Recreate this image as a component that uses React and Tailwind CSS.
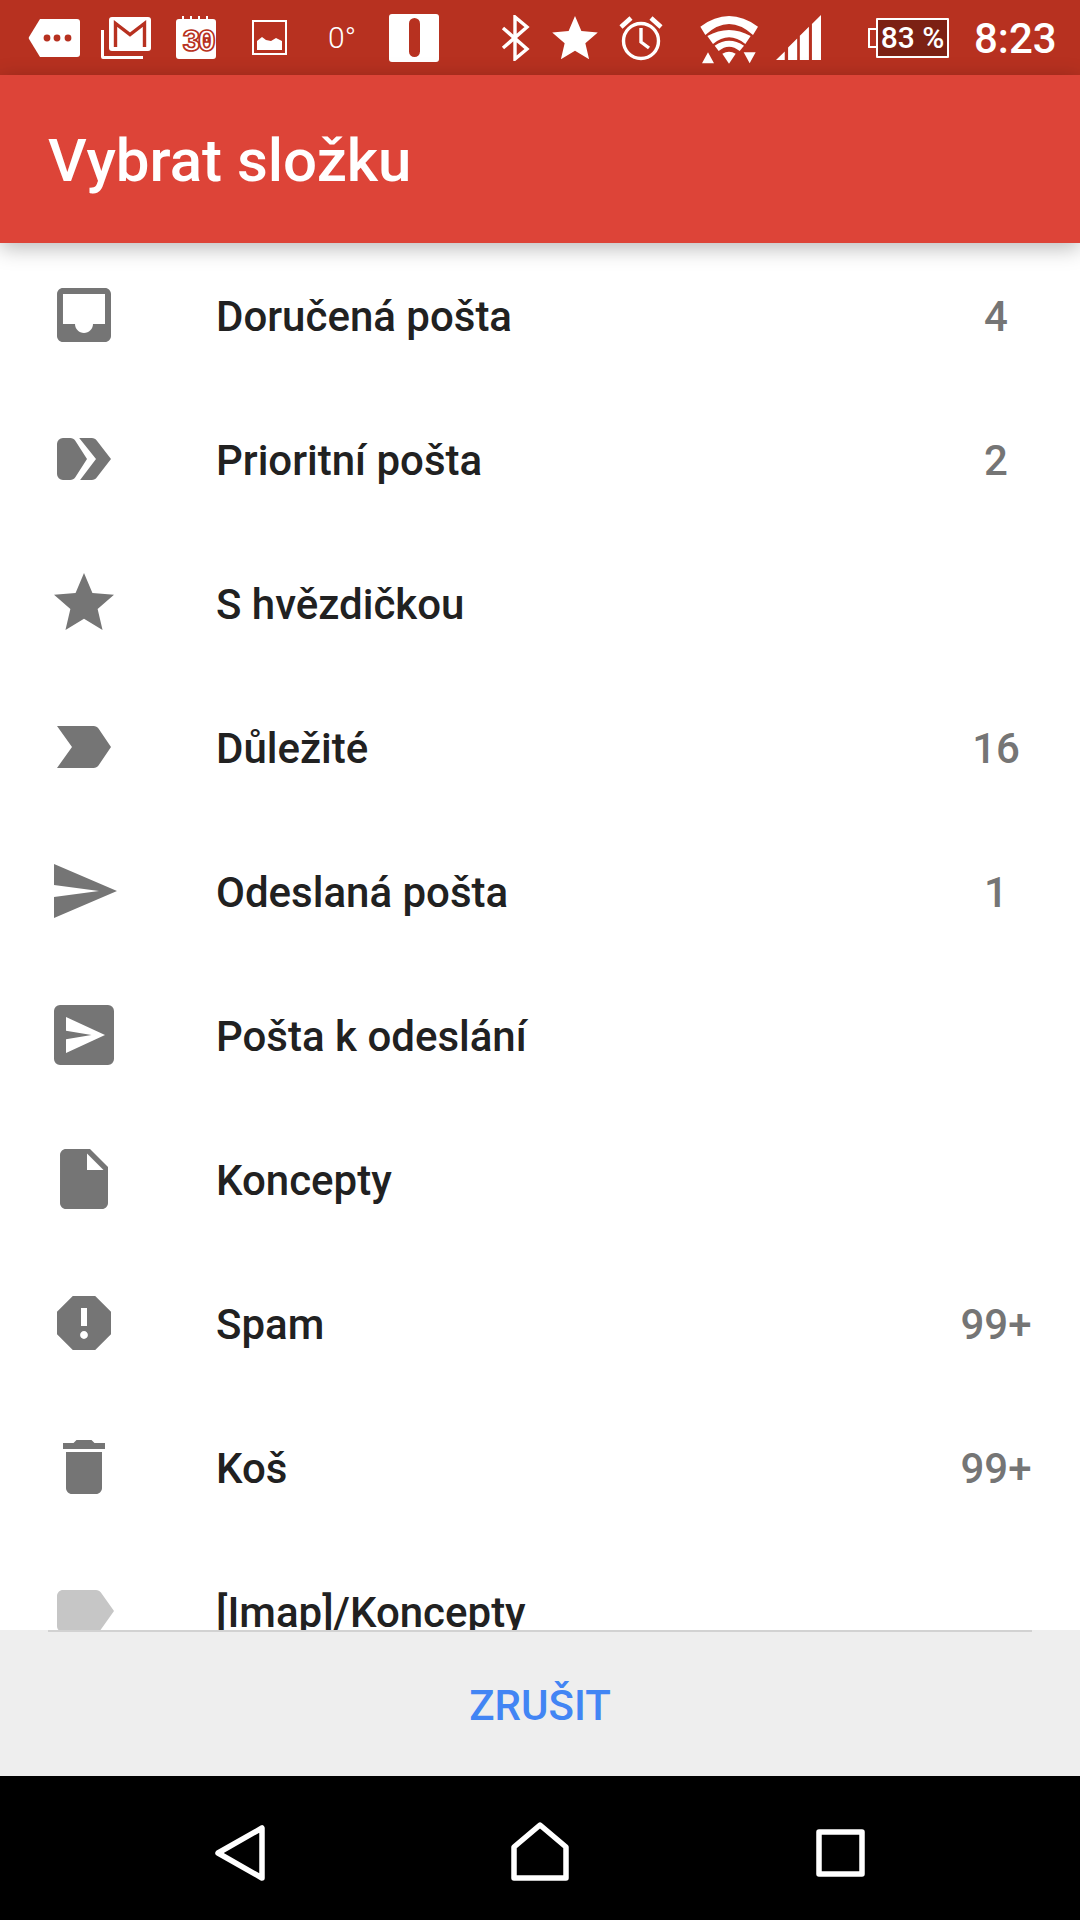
const folders = [
  {
    name: "Doručená pošta",
    count: "4",
    icon: "M19 3H4.99c-1.11 0-1.98.89-1.98 2L3 19c0 1.1.88 2 1.99 2H19c1.1 0 2-.9 2-2V5c0-1.11-.9-2-2-2zm0 12h-4c0 1.66-1.35 3-3 3s-3-1.34-3-3H4.99V5H19v10z",
  },
  {
    name: "Prioritní pošta",
    count: "2",
    icon: "M3 7a2 2 0 0 1 2-2h2.4c.7 0 1.3.3 1.7.9L13 12l-3.9 6.1c-.4.6-1 .9-1.7.9H5a2 2 0 0 1-2-2zM10.4 5h4.2c.7 0 1.3.3 1.7.9L21 12l-4.7 6.1c-.4.6-1 .9-1.7.9h-3.9L16 12z",
  },
  {
    name: "S hvězdičkou",
    icon: "M12 17.27L18.18 21l-1.64-7.03L22 9.24l-7.19-.61L12 2 9.19 8.63 2 9.24l5.46 4.73L5.82 21z",
  },
  {
    name: "Důležité",
    count: "16",
    icon: "M3 19h12.2c.67 0 1.27-.33 1.63-.84L21 12l-4.17-6.16c-.36-.51-.96-.84-1.63-.84H3l5 7z",
  },
  {
    name: "Odeslaná pošta",
    count: "1",
    icon: "M2.01 21L23 12 2.01 3 2 10l15 2-15 2z",
  },
  {
    name: "Pošta k odeslání",
    icon: "M4 2h16a2 2 0 0 1 2 2v16a2 2 0 0 1-2 2H4a2 2 0 0 1-2-2V4a2 2 0 0 1 2-2zM6 6v4.6l8.5 1.4L6 13.4V18l13-6z",
  },
  {
    name: "Koncepty",
    icon: "M6 2c-1.1 0-1.99.9-1.99 2L4 20c0 1.1.89 2 1.99 2H18c1.1 0 2-.9 2-2V8l-6-6H6zm7 7V3.5L18.5 9H13z",
  },
  {
    name: "Spam",
    count: "99+",
    icon: "M15.73 3H8.27L3 8.27v7.46L8.27 21h7.46L21 15.73V8.27L15.73 3zM12 17.3c-.72 0-1.3-.58-1.3-1.3 0-.72.58-1.3 1.3-1.3.72 0 1.3.58 1.3 1.3 0 .72-.58 1.3-1.3 1.3zm1-4.3h-2V7h2v6z",
  },
  {
    name: "Koš",
    count: "99+",
    icon: "M6 19c0 1.1.9 2 2 2h8c1.1 0 2-.9 2-2V7H6v12zM19 4h-3.5l-1-1h-5l-1 1H5v2h14V4z",
  },
  {
    name: "[Imap]/Koncepty",
    faded: true,
    icon: "M17.63 5.84C17.27 5.33 16.67 5 16 5L5 5.01C3.9 5.01 3 5.9 3 7v10c0 1.1.9 1.99 2 1.99L16 19c.67 0 1.27-.33 1.63-.84L22 12l-4.37-6.16z",
  },
];

function StatusBar() {
  return (
    <div className="flex h-[75px] shrink-0 items-center bg-[#b73120] text-white">
      {/* notification icons */}
      <svg className="ml-[28px] shrink-0" width="52" height="40" viewBox="0 0 52 40" fill="#fff">
        <path d="M12 1h37a3 3 0 0 1 3 3v32a3 3 0 0 1-3 3H12L1 21a2 2 0 0 1 0-2z" />
        <circle cx="19" cy="20" r="3.4" fill="#b73120" />
        <circle cx="29" cy="20" r="3.4" fill="#b73120" />
        <circle cx="40" cy="20" r="3.4" fill="#b73120" />
      </svg>
      <svg className="ml-[21px] shrink-0" width="50" height="42" viewBox="0 0 50 42">
        <path d="M0 13h3v26h39v3H2a2 2 0 0 1-2-2z" fill="#fff" />
        <rect x="8" y="0" width="42" height="34" rx="3" fill="#fff" />
        <path d="M14.5 30V6.5L29 17.5l14.5-11V30" fill="none" stroke="#b73120" strokeWidth="3.4" />
      </svg>
      <svg className="ml-[25px] shrink-0" width="43" height="43" viewBox="0 0 43 43">
        <path d="M3 3h3V0h2v3h6V0h2v3h6V0h2v3h6V0h2v3h5a3 3 0 0 1 3 3v34a3 3 0 0 1-3 3H3a3 3 0 0 1-3-3V6a3 3 0 0 1 3-3z" fill="#fff" />
        <text x="21.5" y="35" textAnchor="middle" fontFamily="'Liberation Mono', monospace" fontWeight="700" fontSize="31" letterSpacing="-3" fill="#fff" stroke="#b73120" strokeWidth="1.7">30</text>
      </svg>
      <svg className="ml-[33px] shrink-0" width="35" height="35" viewBox="0 0 35 35" fill="#fff">
        <path d="M0 0h35v35H0zM2 2v31h31V2z" fillRule="evenodd" />
        <path d="M5 30V21l5-4 4 3 5 1 5-3 6 3v9z" />
      </svg>
      <span className="ml-[41px] w-[30px] shrink-0 font-['Roboto',sans-serif] text-[30px] leading-none font-light">0°</span>
      <div className="ml-[31px] flex h-[48px] w-[50px] shrink-0 items-center justify-center rounded-[3px] bg-white">
        <div className="h-[39px] w-[11px] rounded-full bg-[#b73120]" />
      </div>
      {/* system icons */}
      <svg className="ml-[62px] shrink-0" width="30" height="46" viewBox="0 0 30 46" fill="none" stroke="#fff" strokeWidth="3.4">
        <path d="M2 13l24 21-12 10V2l12 10L2 33" />
      </svg>
      <svg className="ml-[21px] shrink-0" width="46" height="44" viewBox="2 2 20 19.3" fill="#fff">
        <path d="M12 17.27L18.18 21l-1.64-7.03L22 9.24l-7.19-.61L12 2 9.19 8.63 2 9.24l5.46 4.73L5.82 21z" />
      </svg>
      <svg className="ml-[21px] shrink-0" width="44" height="46" viewBox="0 0 44 46" fill="none" stroke="#fff" strokeWidth="3.4">
        <circle cx="22" cy="26" r="17.5" />
        <path d="M22 13v14l8 6" />
        <path d="M2 12l10-9M42 12L32 3" strokeWidth="4.6" />
      </svg>
      <svg className="ml-[37px] mt-[5px] shrink-0" width="60" height="50" viewBox="36 30 180 150" fill="#fff">
        <path d="M37 65Q123 1 210 65L195 90Q123 24 52 90z" />
        <path d="M58 93Q123 57 188 93L172 117Q123 77 75 117z" />
        <path d="M80 122Q123 92 168 122L155 138Q123 112 92 138z" />
        <path d="M103 146Q123 134 143 146L123 176z" />
        <path d="M42 175h36L60 142zM167 142h36l-18 33z" />
      </svg>
      <svg className="ml-[16px] shrink-0" width="45" height="45" viewBox="262 33 134 134" fill="#fff">
        <path d="M262 167l26-25v25zM298 167v-37l27-27v64zM333 167V95l27-27v99zM369 167V60l27-27v134z" />
      </svg>
      <div className="ml-[47px] flex h-[40px] shrink-0 items-center">
        <div className="h-[20px] w-[8px] rounded-l-[1px] border-y-[2px] border-l-[2px] border-white" />
        <div className="flex h-[40px] w-[73px] items-center justify-center rounded-[1px] border-[2px] border-white bg-[#7c2114] font-['Roboto',sans-serif] text-[30px] leading-none font-medium">
          83 %
        </div>
      </div>
      <span className="ml-[25px] pt-[2px] font-['Roboto',sans-serif] text-[42px] leading-none font-medium">8:23</span>
    </div>
  );
}

function FolderRow({ folder }) {
  return (
    <div className="flex h-[144px] shrink-0 items-center px-[48px]">
      <svg
        className={folder.faded ? "shrink-0 text-[#c6c6c6]" : "shrink-0 text-[#757575]"}
        width="72"
        height="72"
        viewBox="0 0 24 24"
        fill="currentColor"
        fillRule="evenodd"
      >
        <path d={folder.icon} />
      </svg>
      <span className="ml-[96px] flex-1 pt-[2px] text-[42px] font-medium text-[#212121]">{folder.name}</span>
      {folder.count && <span className="w-[72px] pt-[2px] text-center text-[42px] font-medium text-[#757575]">{folder.count}</span>}
    </div>
  );
}

export default function App() {
  return (
    <div className="flex h-[1920px] w-[1080px] flex-col overflow-hidden bg-white font-['Roboto',sans-serif]">
      <StatusBar />

      {/* Header */}
      <div className="relative z-10 flex h-[168px] shrink-0 items-center bg-[#dd4438] pt-[4px] pl-[48px] shadow-[0_5px_20px_rgba(0,0,0,0.28)]">
        <h1 className="text-[60px] font-medium text-white">Vybrat složku</h1>
      </div>

      {/* Folder list */}
      <div className="flex min-h-0 flex-1 flex-col overflow-hidden">
        {folders.map((folder) => (
          <FolderRow key={folder.name} folder={folder} />
        ))}
      </div>

      {/* Cancel */}
      <div className="shrink-0 bg-[#eeeeee]">
        <div className="mx-[48px] h-[2px] bg-[#d2d2d2]" />
        <div className="flex h-[144px] items-center justify-center pt-[2px] text-[42px] font-medium text-[#4285f4]">ZRUŠIT</div>
      </div>

      {/* Nav bar */}
      <div className="flex h-[144px] shrink-0 items-start bg-black">
        <svg className="ml-[215px] mt-[49px] shrink-0" width="50" height="56" viewBox="0 0 50 56" fill="none" stroke="#fff" strokeWidth="5.5" strokeLinejoin="round">
          <path d="M47 3v50L3 28z" />
        </svg>
        <svg className="ml-[246px] mt-[46px] shrink-0" width="58" height="59" viewBox="0 0 58 59" fill="none" stroke="#fff" strokeWidth="5.5" strokeLinejoin="round">
          <path d="M3 56V25L29 3l26 22v31z" />
        </svg>
        <svg className="ml-[247px] mt-[53px] shrink-0" width="49" height="48" viewBox="0 0 49 48" fill="none" stroke="#fff" strokeWidth="5.5" strokeLinejoin="round">
          <rect x="3" y="3" width="43" height="42" />
        </svg>
      </div>
    </div>
  );
}
